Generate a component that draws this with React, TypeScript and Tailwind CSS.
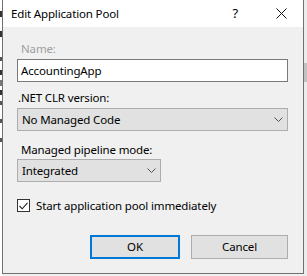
import React from 'react';

const font = { fontFamily: '"Noto Sans", "Open Sans", sans-serif' };

function Chevron() {
  return (
    <svg width="9" height="5" viewBox="0 0 9 5" className="text-[#505050]">
      <path d="M0.5 0.5 L4.5 4.5 L8.5 0.5" fill="none" stroke="currentColor" strokeWidth="1" />
    </svg>
  );
}

export default function App() {
  return (
    <div className="w-[307px] h-[276px] flex bg-[#f0f0f0] overflow-hidden text-[11.5px] tracking-[-0.15px] text-black" style={font}>
      {/* window behind, left edge */}
      <div className="w-[2px] h-full bg-white flex flex-col">
        <div className="h-[11px]" />
        <div className="h-[6px] w-[2px] bg-[#333]" />
        <div className="h-[14px]" />
        <div className="h-[6px] w-[2px] bg-[#333]" />
        <div className="h-[20px]" />
        <div className="h-[4px] w-[2px] bg-[#555]" />
        <div className="h-[9px]" />
        <div className="h-[5px] w-[2px] bg-[#333]" />
        <div className="h-[5px]" />
        <div className="h-[6px] w-[2px] bg-[#777]" />
        <div className="h-[4px]" />
        <div className="h-[5px] w-[2px] bg-[#333]" />
        <div className="h-[6px]" />
        <div className="h-[4px] w-[2px] bg-[#555]" />
        <div className="h-[14px]" />
        <div className="h-[4px] w-[2px] bg-[#555]" />
        <div className="h-[15px]" />
        <div className="h-[4px] w-[2px] bg-[#555]" />
      </div>

      {/* dialog */}
      <div className="w-[302px] h-[274px] flex flex-col border-x border-b border-[#707070]">
        {/* title bar */}
        <div className="h-[27px] bg-white flex items-center">
          <span className="ml-[8px] text-[11.5px]">Edit Application Pool</span>
          <span className="ml-auto mr-[38px] text-[13px]">?</span>
          <svg width="11" height="11" viewBox="0 0 11 11" className="mr-[16px]">
            <path d="M0.5 0.5 L10.5 10.5 M10.5 0.5 L0.5 10.5" stroke="#111" strokeWidth="1" />
          </svg>
        </div>

        {/* body */}
        <div className="flex-1 flex flex-col pt-[14px] pl-[14px]">
          <div className="h-[16px] leading-[16px] pl-[4px] text-[#a0a0a0]">Name:</div>
          <div className="mt-[2px] w-[271px] h-[23px] bg-white border border-[#7a7a7a] flex items-center pl-[3px]">
            AccountingApp
          </div>

          <div className="mt-[8px] h-[16px] leading-[16px] pl-[1px]">.NET CLR version:</div>
          <div className="mt-[2px] w-[271px] h-[23px] bg-[#e1e1e1] border border-[#adadad] flex items-center pl-[4px] pr-[4px]">
            <span>No Managed Code</span>
            <span className="ml-auto"><Chevron /></span>
          </div>

          <div className="mt-[11px] h-[16px] leading-[16px] pl-[4px]">Managed pipeline mode:</div>
          <div className="mt-[1px] w-[144px] h-[23px] bg-[#e1e1e1] border border-[#adadad] flex items-center pl-[4px] pr-[4px]">
            <span>Integrated</span>
            <span className="ml-auto"><Chevron /></span>
          </div>

          <div className="mt-[17px] h-[13px] flex items-center">
            <div className="w-[13px] h-[13px] bg-white border border-[#333] flex items-center justify-center">
              <svg width="9" height="8" viewBox="0 0 9 8">
                <path d="M0.5 4 L3.2 6.8 L8.5 0.8" fill="none" stroke="#222" strokeWidth="1.1" />
              </svg>
            </div>
            <span className="ml-[6px]">Start application pool immediately</span>
          </div>

          <div className="mt-[23px] h-[24px] flex justify-end pr-[15px] gap-[11px]">
            <button className="w-[90px] h-[24px] bg-[#e1e1e1] border-2 border-[#0078d7] flex items-center justify-center">
              OK
            </button>
            <button className="w-[97px] h-[24px] bg-[#e1e1e1] border border-[#adadad] flex items-center justify-center">
              Cancel
            </button>
          </div>
        </div>
      </div>

      {/* window behind, right edge */}
      <div className="w-[3px] h-full flex flex-col bg-[#ececec]">
        <div className="h-[63px]" />
        <div className="h-[19px] bg-[#c2c2c2]" />
      </div>
    </div>
  );
}
